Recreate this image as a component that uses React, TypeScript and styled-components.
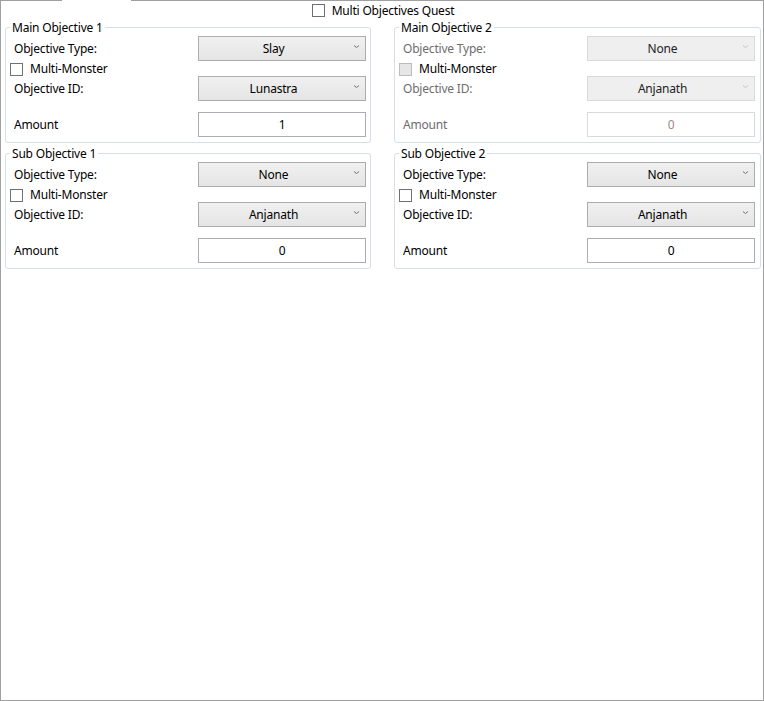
import styled, {createGlobalStyle} from 'styled-components'

const GlobalStyle = createGlobalStyle`
  html, body {
    margin: 0;
    padding: 0;
    background: #ffffff;
  }
  body {
    font-family: "Noto Sans", "Open Sans", sans-serif;
    font-size: 12px;
    letter-spacing: -0.2px;
    color: #000000;
  }
`

interface Objective {
  title: string
  type: string
  id: string
  amount: string
  disabled?: boolean
}

const objectives: Objective[] = [
  {title: 'Main Objective 1', type: 'Slay', id: 'Lunastra', amount: '1'},
  {title: 'Main Objective 2', type: 'None', id: 'Anjanath', amount: '0', disabled: true},
  {title: 'Sub Objective 1', type: 'None', id: 'Anjanath', amount: '0'},
  {title: 'Sub Objective 2', type: 'None', id: 'Anjanath', amount: '0'},
]

function Chevron({disabled}: {disabled?: boolean}) {
  return (
    <svg width="5" height="3" viewBox="0 0 5 3">
      <polyline
        points="0,0.5 2.5,2.5 5,0.5"
        fill="none"
        stroke={disabled ? '#c4c4c4' : '#707070'}
        strokeWidth="1"
      />
    </svg>
  )
}

function ObjectiveGroup({objective}: {objective: Objective}) {
  const off = objective.disabled
  return (
    <Group>
      <Legend>
        <LegendText>{objective.title}</LegendText>
      </Legend>
      <Row>
        <Label $disabled={off}>Objective Type:</Label>
        <Combo $disabled={off}>
          <ComboText>{objective.type}</ComboText>
          <ComboArrow>
            <Chevron disabled={off} />
          </ComboArrow>
        </Combo>
      </Row>
      <CheckRow>
        <Box $disabled={off} />
        <CheckText>Multi-Monster</CheckText>
      </CheckRow>
      <Row>
        <Label $disabled={off}>Objective ID:</Label>
        <Combo $disabled={off}>
          <ComboText>{objective.id}</ComboText>
          <ComboArrow>
            <Chevron disabled={off} />
          </ComboArrow>
        </Combo>
      </Row>
      <Row $spaced>
        <Label $disabled={off}>Amount</Label>
        <TextBox $disabled={off}>{objective.amount}</TextBox>
      </Row>
    </Group>
  )
}

export default function App() {
  return (
    <>
      <GlobalStyle />
      <Frame>
        <TabLine>
          <TabEdge style={{width: 61}} />
          <TabGap />
          <TabEdge style={{flex: 1}} />
        </TabLine>
        <Content>
          <Header>
            <Box />
            <CheckText>Multi Objectives Quest</CheckText>
          </Header>
          <Groups>
            {objectives.map(o => (
              <ObjectiveGroup key={o.title} objective={o} />
            ))}
          </Groups>
        </Content>
      </Frame>
    </>
  )
}

const Frame = styled.div`
  width: 764px;
  height: 701px;
  box-sizing: border-box;
  border: 1px solid #a0a0a0;
  border-top: none;
  display: flex;
  flex-direction: column;
`

const TabLine = styled.div`
  display: flex;
  height: 1px;
`

const TabEdge = styled.div`
  height: 1px;
  background: #a0a0a0;
`

const TabGap = styled.div`
  width: 69px;
`

const Content = styled.div`
  padding: 0 2px 0 4px;
`

const Header = styled.div`
  height: 18px;
  box-sizing: border-box;
  padding-top: 3px;
  display: flex;
  justify-content: center;
  align-items: flex-start;
  line-height: 13px;
`

const Groups = styled.div`
  display: grid;
  grid-template-columns: 366px 367px;
  column-gap: 23px;
  row-gap: 2px;
`

const Group = styled.fieldset`
  margin: 0;
  min-width: 0;
  padding: 1px 3px 5px 4px;
  border: 1px solid #d5dfe5;
  border-radius: 3px;
`

const Legend = styled.legend`
  padding: 0 2px;
  margin: 0;
  line-height: 16px;
  font-size: 12px;
  color: #000000;
`

const LegendText = styled.span`
  position: relative;
  top: 1px;
`

const Row = styled.div<{$spaced?: boolean}>`
  display: grid;
  grid-template-columns: 188px 168px;
  align-items: center;
  height: 25px;
  margin-top: ${p => (p.$spaced ? '11px' : '0')};
`

const Label = styled.span<{$disabled?: boolean}>`
  padding-left: 4px;
  color: ${p => (p.$disabled ? '#6d6d6d' : '#000000')};
`

const Combo = styled.div<{$disabled?: boolean}>`
  height: 25px;
  box-sizing: border-box;
  display: flex;
  align-items: center;
  border: 1px solid ${p => (p.$disabled ? '#d9d9d9' : '#acacac')};
  background: ${p =>
    p.$disabled ? '#efefef' : 'linear-gradient(#f0f0f0, #e5e5e5)'};
  color: ${p => (p.$disabled ? '#222222' : '#000000')};
`

const ComboText = styled.span`
  flex: 1;
  text-align: center;
`

const ComboArrow = styled.span`
  width: 17px;
  height: 100%;
  display: flex;
  align-items: center;
  justify-content: center;
  padding-bottom: 5px;
  box-sizing: border-box;
`

const TextBox = styled.div<{$disabled?: boolean}>`
  height: 25px;
  box-sizing: border-box;
  display: flex;
  align-items: center;
  justify-content: center;
  border: 1px solid ${p => (p.$disabled ? '#d9d9d9' : '#abadb3')};
  background: #ffffff;
  color: ${p => (p.$disabled ? '#9a8a80' : '#000000')};
`

const CheckRow = styled.div`
  height: 15px;
  box-sizing: border-box;
  padding-top: 2px;
  display: flex;
  align-items: flex-start;
  line-height: 12px;
`

const Box = styled.span<{$disabled?: boolean}>`
  width: 13px;
  height: 13px;
  box-sizing: border-box;
  flex-shrink: 0;
  border: 1px solid ${p => (p.$disabled ? '#bcbcbc' : '#707070')};
  background: ${p => (p.$disabled ? '#e6e6e6' : '#ffffff')};
`

const CheckText = styled.span`
  margin-left: 7px;
  white-space: nowrap;
`
